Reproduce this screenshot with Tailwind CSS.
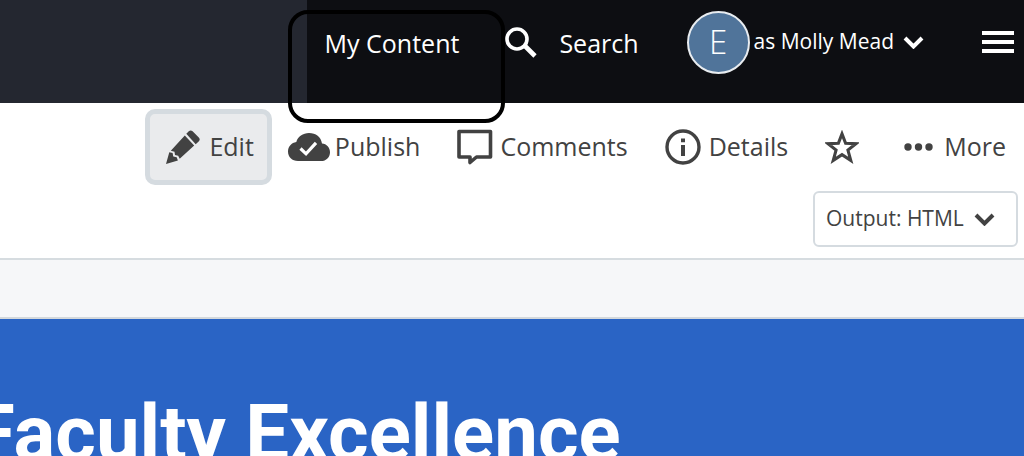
<!DOCTYPE html>
<html lang="en">
  <head>
    <meta charset="UTF-8">
    <meta name="viewport" content="width=device-width, initial-scale=1">
    <title>Faculty Excellence</title>
    <script src="https://cdn.jsdelivr.net/npm/@tailwindcss/browser@4"></script>
  </head>
  <body class="h-screen overflow-hidden flex flex-col bg-white font-['Open_Sans',sans-serif] text-[#424242] whitespace-nowrap">
    <header class="flex h-[103px] shrink-0 bg-[#242730] text-white">
      <nav class="ml-[30%] flex flex-1 items-start justify-end bg-[#0d0e12] pt-[10px] pr-[10px]" aria-label="Main">
        <a href="#" class="relative mr-[46px] flex h-16 items-center pt-1 text-[25px]">
          My Content
          <!-- highlight around the link -->
          <span class="absolute top-0 -left-[37px] -right-[46px] h-[113px] rounded-[20px] border-4 border-black"></span>
        </a>
        <a href="#" class="mr-12 flex h-16 items-center gap-[22px] pt-1 text-[25px]">
          <svg class="-mt-1 h-[31px] w-8" viewBox="0 0 32 31" fill="none" stroke="currentColor" aria-hidden="true">
            <circle cx="12" cy="12" r="10" stroke-width="3.6" />
            <path d="M20 19 30 29" stroke-width="4.6" />
          </svg>
          Search
        </a>
        <button type="button" class="flex h-16 items-center text-[21px]">
          <span class="mr-1 flex size-[63px] items-center justify-center rounded-full border-2 border-[#e8ecf0] bg-[#50749a] text-[33px] font-light">E</span>
          as Molly Mead
          <svg class="ml-[9px] h-[13px] w-[21px]" viewBox="0 0 21 13" fill="none" stroke="currentColor" stroke-width="4" aria-hidden="true">
            <path d="m2 2 8.500 8.500L19 2" />
          </svg>
        </button>
        <button type="button" class="ml-[58px] flex h-16 items-center" aria-label="Menu">
          <svg class="h-[22px] w-8" viewBox="0 0 32 22" fill="currentColor" aria-hidden="true">
            <path d="M0 0h32v4H0zM0 9h32v4H0zM0 18h32v4H0z" />
          </svg>
        </button>
      </nav>
    </header>

    <div class="shrink-0 border-b-2 border-[#d6dce0] pb-[11px]">
      <div class="flex items-center justify-end pt-[6px] pr-[18px] text-[25px]" role="toolbar" aria-label="Page actions">
        <button type="button" class="mr-4 flex h-[76px] items-center gap-[9px] rounded-[10px] border-[5px] border-[#d5dbe0] bg-[#eaebed] px-[13px]">
          <svg class="ml-[3px] size-[34px]" viewBox="0 0 34 34" fill="currentColor" aria-hidden="true">
            <path d="m20.300 3.800 2.500-2.600c1.200-1.100 2.600-1.100 3.800 0l6.200 6.200c1.200 1.200 1.200 2.600.1 3.800l-3.200 3z" />
            <path d="m18.800 5.500 9.400 10-14.500 13.300-1.500-3-3.200-.8-.5-3.300-3.700-1z" />
            <path d="M3.300 22.300 0 34l11.900-3.500-1.200-3.300-3.400-.8-.7-3.400z" />
          </svg>
          Edit
        </button>
        <button type="button" class="mr-[37px] flex items-center gap-[5px]">
          <svg class="h-7 w-[42px]" viewBox="0 0 42 28" aria-hidden="true">
            <path fill="currentColor" d="M10 28C4 28 0 24 0 18.500 0 13.500 3.500 9.700 8.300 9 9.800 3.500 15 0 21 0c6.800 0 12 4 13 10.500 4.600.3 8 4 8 8.700C42 24.300 38.300 28 33 28z" />
            <path fill="none" stroke="#fff" stroke-width="3.200" d="m12.500 15.500 5.500 5.300L28 9.800" />
          </svg>
          Publish
        </button>
        <button type="button" class="mr-[37px] flex items-center gap-[7px]">
          <svg class="h-9 w-9" viewBox="0 0 36 36" fill="none" stroke="currentColor" stroke-width="3.600" stroke-linejoin="round" aria-hidden="true">
            <path d="M2 2.500h31.500V28H19.500L13 33.500V28H2z" />
          </svg>
          Comments
        </button>
        <button type="button" class="mr-[37px] flex items-center gap-2">
          <svg class="h-9 w-9" viewBox="0 0 36 36" fill="none" stroke="currentColor" aria-hidden="true">
            <circle cx="18" cy="18" r="16" stroke-width="3.400" />
            <path d="M18 9.500v3.800M18 16v11" stroke-width="4" />
          </svg>
          Details
        </button>
        <button type="button" class="mr-[45px]" aria-label="Add to favorites">
          <svg class="h-[34px] w-[34px]" viewBox="1.500 1.500 31 31" fill="none" stroke="currentColor" stroke-width="2.800" aria-hidden="true">
            <path d="m17 5 3.300 8.600 9.400.4-7.300 5.900 2.600 9.300-8-5.200-8 5.200 2.600-9.300L4.300 14l9.400-.4z" />
          </svg>
        </button>
        <button type="button" class="flex items-center gap-[11px]">
          <svg class="h-2 w-[29px]" viewBox="0 0 29 8" fill="currentColor" aria-hidden="true">
            <circle cx="4" cy="4" r="3.700" />
            <circle cx="14.500" cy="4" r="3.700" />
            <circle cx="25" cy="4" r="3.700" />
          </svg>
          More
        </button>
      </div>

      <div class="mt-[6px] mr-[6px] flex justify-end">
        <div class="relative w-[205px]">
          <select class="h-14 w-full appearance-none rounded-md border-2 border-[#d5dbe0] bg-white pl-[11px] text-[21px]" aria-label="Output format">
            <option>Output: HTML</option>
          </select>
          <svg class="pointer-events-none absolute top-[22px] right-[23px] h-[13px] w-[21px]" viewBox="0 0 21 13" fill="none" stroke="currentColor" stroke-width="4" aria-hidden="true">
            <path d="m2 2 8.500 8.500L19 2" />
          </svg>
        </div>
      </div>
    </div>

    <div class="h-[59px] shrink-0 border-b-2 border-[#d3d8dc] bg-[#f6f7f9]"></div>

    <main class="min-h-0 flex-1 overflow-hidden bg-[#2a64c5]">
      <h1 class="-ml-[28px] pt-[69px] font-[Roboto,sans-serif] text-[78px] leading-[92px] font-bold text-white">Faculty Excellence</h1>
    </main>
  </body>
</html>
